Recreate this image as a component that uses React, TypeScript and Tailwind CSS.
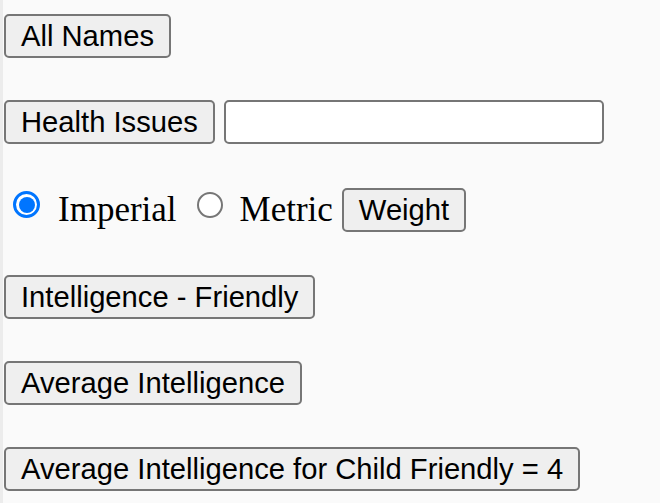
import React from "react";

const btn =
  "h-[44px] px-[15px] border-2 border-[#767676] rounded-[5px] bg-[#efefef] text-black text-[29.2px] leading-[33px] flex items-center whitespace-nowrap [font-family:'Liberation_Sans',Arial,sans-serif]";

function Radio({ checked }: { checked: boolean }) {
  return checked ? (
    <span className="w-[27px] h-[27px] rounded-full border-[3px] border-[#0075ff] bg-white flex items-center justify-center shrink-0">
      <span className="w-[16px] h-[16px] rounded-full bg-[#0075ff]" />
    </span>
  ) : (
    <span className="block w-[26px] h-[26px] rounded-full border-2 border-[#767676] bg-white shrink-0" />
  );
}

export default function App() {
  return (
    <div className="w-[660px] h-[503px] bg-[#fafafa] border-l-[3px] border-[#ececec] overflow-hidden">
      <div className="flex flex-col items-start pl-[1px] pt-[14px]">
        <button className={btn}>All Names</button>
        <div className="mt-[42px] flex items-center">
          <button className={btn}>Health Issues</button>
          <input
            type="text"
            className="ml-[9px] w-[380px] h-[44px] border-2 border-[#767676] rounded-[5px] bg-white outline-none"
          />
        </div>
        <div className="mt-[44px] h-[44px] flex items-center [font-family:'Liberation_Serif','Times_New_Roman',serif] text-[35px] leading-[40px] text-black">
          <span className="ml-[9px] mt-[-11px] flex">
            <Radio checked={true} />
          </span>
          <span className="ml-[18px]">Imperial</span>
          <span className="ml-[20px] mt-[-11px] flex">
            <Radio checked={false} />
          </span>
          <span className="ml-[17px]">Metric</span>
          <button className={btn + " ml-[9px]"}>Weight</button>
        </div>
        <button className={btn + " mt-[43px]"}>Intelligence - Friendly</button>
        <button className={btn + " mt-[42px]"}>Average Intelligence</button>
        <button className={btn + " mt-[42px]"}>
          Average Intelligence for Child Friendly = 4
        </button>
      </div>
    </div>
  );
}
